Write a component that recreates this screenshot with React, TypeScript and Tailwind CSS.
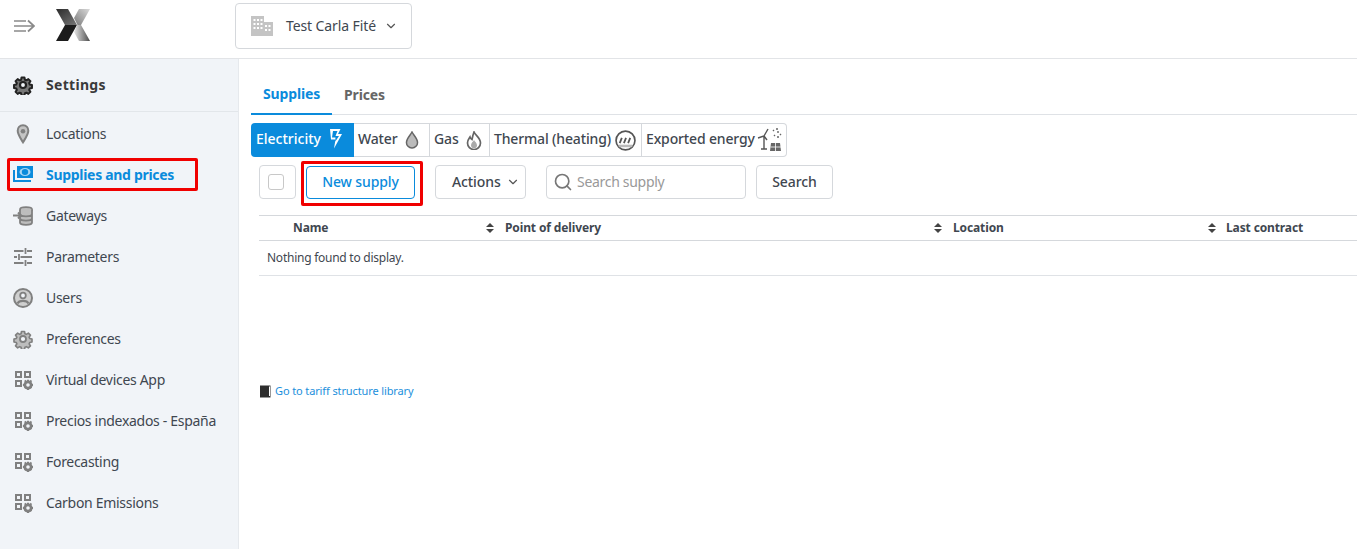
import React from "react";
import { ChevronDown, Search } from "lucide-react";

const FONT = "font-['Noto_Sans','Open_Sans',sans-serif]";

const AppsIcon = () => (
  <svg width="20" height="20" viewBox="0 0 20 20" fill="#808080">
    <path fillRule="evenodd" d="M2 1h7v7H2zM4 3v3h3V3zM11 1h7v7h-7zM13 3v3h3V3zM2 10h7v7H2zM4 12v3h3v-3z" />
    <circle cx="15" cy="15" r="3.200" fill="none" stroke="#808080" strokeWidth="2.800" />
    <path d="M14 9.800h2v2h-2zM14 18.200h2v2h-2zM9.900 14h2v2h-2zM18.100 14h2v2h-2zM11.100 11l1.400-1.200 1.200 1.400-1.400 1.200zM16.500 17.400l1.400-1.200 1.200 1.400-1.400 1.200zM17.900 9.800l1.200 1.400-1.400 1.200-1.200-1.400zM12.500 16.200l1.200 1.400-1.400 1.200-1.200-1.400z" />
  </svg>
);

const Gear = ({ color, fill, sw = 2.200 }: { color: string; fill: string; sw?: number }) => (
  <svg width="20" height="20" viewBox="0 0 24 24" fill={fill} stroke={color} strokeWidth={sw} strokeLinejoin="round">
    <path d="M10 2h4l.6 3 1.900.8 2.600-1.700 2.800 2.800-1.700 2.600.8 1.900 3 .6v4l-3 .6-.8 1.900 1.700 2.600-2.800 2.800-2.600-1.700-1.900.8-.6 3h-4l-.6-3-1.900-.8-2.600 1.700-2.800-2.800 1.700-2.600-.8-1.900-3-.6v-4l3-.6.8-1.900-1.700-2.600 2.800-2.800 2.600 1.700 1.900-.8z" transform="translate(1.200 1.200) scale(.9)" />
    <circle cx="12" cy="12" r="3.600" fill="#f1f4f8" />
  </svg>
);

const PinIcon = () => (
  <svg width="20" height="20" viewBox="0 0 20 20" fill="none">
    <path d="M10 1.200c-3.400 0-5.300 2.500-5.300 5.500 0 3.600 3 7.800 5.300 11.600 2.300-3.800 5.300-8 5.300-11.600 0-3-1.900-5.500-5.300-5.500z" fill="#c4c4c4" stroke="#808080" strokeWidth="2" />
    <circle cx="10" cy="7.200" r="2.300" fill="#808080" />
  </svg>
);

const MoneyIcon = () => (
  <svg width="20" height="20" viewBox="0 0 20 20">
    <path d="M4 1h16v12H4z" fill="#0a8bdc" />
    <ellipse cx="12" cy="7" rx="5.500" ry="4" fill="#a9d6f3" />
    <ellipse cx="12" cy="7" rx="3.200" ry="3" fill="#0a8bdc" />
    <path d="M0 5h2v10h16v2H0z" fill="#0a8bdc" />
  </svg>
);

const GatewayIcon = () => (
  <svg width="20" height="20" viewBox="0 0 20 20" fill="#bdbdbd" stroke="#808080" strokeWidth="1.800">
    <ellipse cx="13" cy="3.500" rx="6" ry="2.300" />
    <path d="M7 4v12.500c0 1.300 2.700 2.300 6 2.300s6-1 6-2.300V3.500M7 8c0 1.300 2.700 2.300 6 2.300S19 9.300 19 8M7 12.300c0 1.300 2.700 2.300 6 2.300s6-1 6-2.300" />
    <path d="M0 9.500h8M5 6.500l3 3-3 3" strokeWidth="2" fill="none" />
  </svg>
);

const SlidersIcon = () => (
  <svg width="20" height="20" viewBox="0 0 20 20" stroke="#808080" strokeWidth="1.800" fill="none">
    <path d="M1 4h9.500M14 4h5M12.500 1v6M1 10h3M7.500 10h11.500M6 7v6M1 16h9.500M14 16h5M12.500 13v6" />
  </svg>
);

const UserIcon = () => (
  <svg width="20" height="20" viewBox="0 0 20 20" fill="#cfcfcf" stroke="#808080">
    <circle cx="10" cy="10" r="9" strokeWidth="2" />
    <circle cx="10" cy="7.500" r="2.800" strokeWidth="1.800" fill="#f1f4f8" />
    <path d="M4.500 15.500c.8-2 3-2.700 5.500-2.700s4.700.7 5.500 2.700" strokeWidth="2.200" fill="none" />
  </svg>
);

const Sort = () => (
  <svg width="8" height="10" viewBox="0 0 8 10" fill="#444" className="shrink-0">
    <path d="M4 0l4 4H0zM4 10L0 6h8z" />
  </svg>
);

const navItems: { label: string; icon: React.ReactNode; active?: boolean }[] = [
  { label: "Locations", icon: <PinIcon /> },
  { label: "Supplies and prices", icon: <MoneyIcon />, active: true },
  { label: "Gateways", icon: <GatewayIcon /> },
  { label: "Parameters", icon: <SlidersIcon /> },
  { label: "Users", icon: <UserIcon /> },
  { label: "Preferences", icon: <Gear color="#808080" fill="#bdbdbd" /> },
  { label: "Virtual devices App", icon: <AppsIcon /> },
  { label: "Precios indexados - España", icon: <AppsIcon /> },
  { label: "Forecasting", icon: <AppsIcon /> },
  { label: "Carbon Emissions", icon: <AppsIcon /> },
];

const BoltIcon = () => (
  <svg width="16" height="21" viewBox="0 0 16 21" fill="#fff">
    <path d="M2 1h10.500l-2.500 5h4L6 20.500l1.500-9H3zM5 3l-1 6.500h3.500L7 14l4-6H7.500L9.500 3z" fillRule="evenodd" />
  </svg>
);

const DropIcon = () => (
  <svg width="14" height="18" viewBox="0 0 14 18" fill="#bbb" stroke="#666" strokeWidth="1.500">
    <path d="M7 1c1.500 3 5.500 6.500 5.500 10.300A5.400 5.400 0 0 1 7 17a5.400 5.400 0 0 1-5.500-5.700C1.500 7.500 5.500 4 7 1z" />
  </svg>
);

const FlameIcon = () => (
  <svg width="16" height="19" viewBox="0 0 16 19" fill="none" stroke="#666" strokeWidth="1.700">
    <path d="M8 1c1 3 6.500 5.500 6.500 11a6.500 6.500 0 0 1-13 0c0-3 1.500-4.500 2.500-6 .5 1.500 1 2 2 2.500C6.500 6 7 3.500 8 1z" />
    <path d="M8 9c.8 1.500 3 3 3 5.200a3 3 0 0 1-6 0C5 12 7.200 10.500 8 9z" fill="#aaa" stroke="none" />
  </svg>
);

const ThermalIcon = () => (
  <svg width="21" height="21" viewBox="0 0 20 20" fill="none" stroke="#555">
    <circle cx="10" cy="10" r="9" strokeWidth="1.600" />
    <path d="M3.500 15.200h13" stroke="#bbb" strokeWidth="2.400" />
    <path d="M4.500 12.500l2-5M8.500 12.500l2-5M12.500 12.500l2-5" strokeWidth="1.700" />
  </svg>
);

const ExportIcon = () => (
  <svg width="26" height="24" viewBox="0 0 26 24" fill="none" stroke="#555">
    <path d="M7 9v12M4 21h6M7 8L1 10M7 8l4-7M7 8l3 4" strokeWidth="1.400" />
    <path d="M14 15h9l1 8H13z" fill="#666" stroke="none" />
    <path d="M13.500 19h10.500M18.500 15v8" stroke="#fff" strokeWidth=".8" />
    <path d="M17 7l1 1M21 3v2M24 6l-1 1M20 9h2M16 2l1 1M19 1h2" stroke="#666" strokeWidth="1.400" />
  </svg>
);

const tabs = [
  { label: "Water", icon: <DropIcon />, cls: "w-[76px] gap-[8px]" },
  { label: "Gas", icon: <FlameIcon />, cls: "w-[60px] gap-[7px]" },
  { label: "Thermal (heating)", icon: <ThermalIcon />, cls: "w-[152px] gap-[4px]" },
  { label: "Exported energy", icon: <ExportIcon />, cls: "w-[144px] gap-[2px]" },
];

export default function App() {
  return (
    <div className={`${FONT} relative flex h-[549px] w-[1357px] flex-col overflow-hidden bg-white text-[14px] tracking-[-0.3px] text-[#3f4750]`}>
      <header className="flex h-[59px] shrink-0 items-center border-b border-[#e2e4e7] pb-[6px] pl-[14px]">
        <svg width="21" height="14" viewBox="0 0 21 14" fill="none" stroke="#8a8a8a" strokeWidth="1.700">
          <path d="M0 2h12M0 7h19M0 12h12M14 1.500L20 7l-6 5.500" />
        </svg>
        <svg width="34" height="32" viewBox="0 0 34 32" className="mb-[2px] ml-[21px]">
          <defs>
            <linearGradient id="armTop" x1="0" y1="0" x2="1" y2="1">
              <stop offset="0" stopColor="#2b2b2b" />
              <stop offset="1" stopColor="#777" />
            </linearGradient>
            <linearGradient id="armRightTop" x1="0" y1="1" x2="1" y2="0">
              <stop offset="0" stopColor="#777" />
              <stop offset="1" stopColor="#dadada" />
            </linearGradient>
            <linearGradient id="armRightLow" x1="0" y1="0" x2="1" y2="0">
              <stop offset="0" stopColor="#e6e6e6" />
              <stop offset="1" stopColor="#4a4a4a" />
            </linearGradient>
          </defs>
          <path d="M0 0h12l9 16H9z" fill="url(#armTop)" />
          <path d="M9 16h12L12 32H0z" fill="#1c1c1c" />
          <path d="M34 0H23l-5 9 4 8 3-1z" fill="url(#armRightTop)" />
          <path d="M21 16h4l9 16H23l-5-9z" fill="url(#armRightLow)" />
        </svg>
        <button className="ml-[145px] flex h-[46px] w-[177px] items-center rounded border border-[#d5d8dc] pl-[15px]">
          <svg width="22" height="20" viewBox="0 0 22 20" fill="#c4c4c4">
            <path fillRule="evenodd" d="M0 0h13v6h9v14H0zM2.500 3v2h2V3zM6 3v2h2V3zM9.500 3v2h2V3zM2.500 7v2h2V7zM6 7v2h2V7zM9.500 7v2h2V7zM2.500 11v2h2v-2zM6 11v2h2v-2zM9.500 11v2h2v-2zM14 9v2h2V9zM17.500 9v2h2V9zM14 13v2h2v-2zM17.500 13v2h2v-2z" />
          </svg>
          <span className="mb-[2px] ml-[13px] whitespace-nowrap tracking-[-0.1px]">Test Carla Fité</span>
          <ChevronDown size={14} className="ml-[8px]" strokeWidth={2} color="#555" />
        </button>
      </header>

      <div className="flex min-h-0 flex-1">
        <aside className="w-[239px] shrink-0 border-r border-[#e6e9ed] bg-[#f1f4f8]">
          <div className="flex h-[53px] items-center gap-[13px] border-b border-[#e2e6ea] pb-[1px] pl-[13px] font-bold tracking-[0.3px] text-[#3a3a3a]">
            <Gear color="#222" fill="#777" sw={2.600} />
            <span>Settings</span>
          </div>
          <nav className="flex flex-col pt-[1px]">
            {navItems.map((item) => (
              <div key={item.label} className="flex h-[41px] items-center gap-[13px] pl-[13px]">
                <span className="flex w-[20px] justify-center">{item.icon}</span>
                <span className={`whitespace-nowrap ${item.active ? "font-bold text-[#0a8bdc]" : ""}`}>{item.label}</span>
              </div>
            ))}
          </nav>
        </aside>

        <main className="min-w-0 flex-1 pl-[12px]">
          <div className="mt-[15px] flex h-[41px] border-b border-[#dfe2e6] font-bold tracking-[-0.15px]">
            <div className="flex h-[41px] w-[81px] items-center justify-center border-b-2 border-[#0a8bdc] text-[#0a8bdc]">Supplies</div>
            <div className="flex w-[65px] items-center justify-center text-[#666]">Prices</div>
          </div>

          <div className="mt-[8px] flex h-[34px] w-[536px] font-medium tracking-[-0.15px]">
            <div className="flex w-[104px] items-center gap-[7px] rounded-l bg-[#0a8bdc] pb-[3px] pl-[5px] tracking-normal text-white">
              <span>Electricity</span>
              <BoltIcon />
            </div>
            <div className="flex flex-1 rounded-r border border-l-0 border-[#d5d8dc]">
              {tabs.map((t, i) => (
                <div key={t.label} className={`flex items-center pl-[4px] ${t.cls} ${i < tabs.length - 1 ? "border-r border-[#d5d8dc]" : ""}`}>
                  <span className="mb-[3px] whitespace-nowrap">{t.label}</span>
                  {t.icon}
                </div>
              ))}
            </div>
          </div>

          <div className="mt-[8px] ml-[8px] flex h-[34px] items-center font-medium tracking-[-0.1px]">
            <div className="flex h-[34px] w-[37px] items-center justify-center rounded border border-[#d5d8dc]">
              <span className="mr-[3px] h-[16px] w-[16px] rounded-[3px] border border-[#c8c8c8]" />
            </div>
            <button className="ml-[10px] h-[33px] w-[109px] rounded border border-[#0a8bdc] pb-[1px] text-[#0a8bdc]">New supply</button>
            <button className="ml-[20px] flex h-[34px] w-[91px] items-center gap-[5px] rounded border border-[#d5d8dc] pb-[1px] pl-[16px]">
              Actions
              <ChevronDown size={14} color="#555" />
            </button>
            <div className="ml-[20px] flex h-[34px] w-[200px] items-center gap-[4px] rounded border border-[#d5d8dc] pb-[1px] pl-[6px] font-normal tracking-[-0.3px] text-[#999]">
              <Search size={20} color="#777" />
              <span>Search supply</span>
            </div>
            <button className="ml-[10px] h-[34px] w-[77px] rounded border border-[#d5d8dc] pb-[1px]">Search</button>
          </div>

          <div className="mt-[16px] ml-[8px] text-[12px] tracking-[-0.12px]">
            <div className="flex h-[26px] items-center border-y border-[#d5d8dc] font-bold">
              <div className="flex w-[238px] items-center justify-between pr-[3px] pl-[34px]">
                <span>Name</span>
                <Sort />
              </div>
              <div className="flex w-[448px] items-center justify-between pr-[3px] pl-[8px]">
                <span>Point of delivery</span>
                <Sort />
              </div>
              <div className="flex w-[274px] items-center justify-between pr-[3px] pl-[8px]">
                <span>Location</span>
                <Sort />
              </div>
              <div className="pl-[7px]">Last contract</div>
            </div>
            <div className="flex h-[35px] items-center border-b border-[#dfe2e6] pl-[8px] tracking-[-0.25px]">Nothing found to display.</div>
          </div>

          <div className="mt-[107px] ml-[8px] flex items-center gap-[4px] text-[11px] tracking-[-0.12px] text-[#1b8fdc]">
            <svg width="12" height="13" viewBox="0 0 12 13">
              <path d="M1 .5h10.500V12.500H1z" fill="#2e2e2e" />
              <path d="M10 1.500V11h1V1.500z" fill="#fff" />
            </svg>
            <span>Go to tariff structure library</span>
          </div>
        </main>
      </div>

      <div className="absolute left-[7px] top-[158px] h-[33px] w-[191px] rounded-[2px] border-[3px] border-[#f00000]" />
      <div className="absolute left-[301px] top-[161px] h-[45px] w-[122px] rounded-[2px] border-[3px] border-[#f00000]" />
    </div>
  );
}
